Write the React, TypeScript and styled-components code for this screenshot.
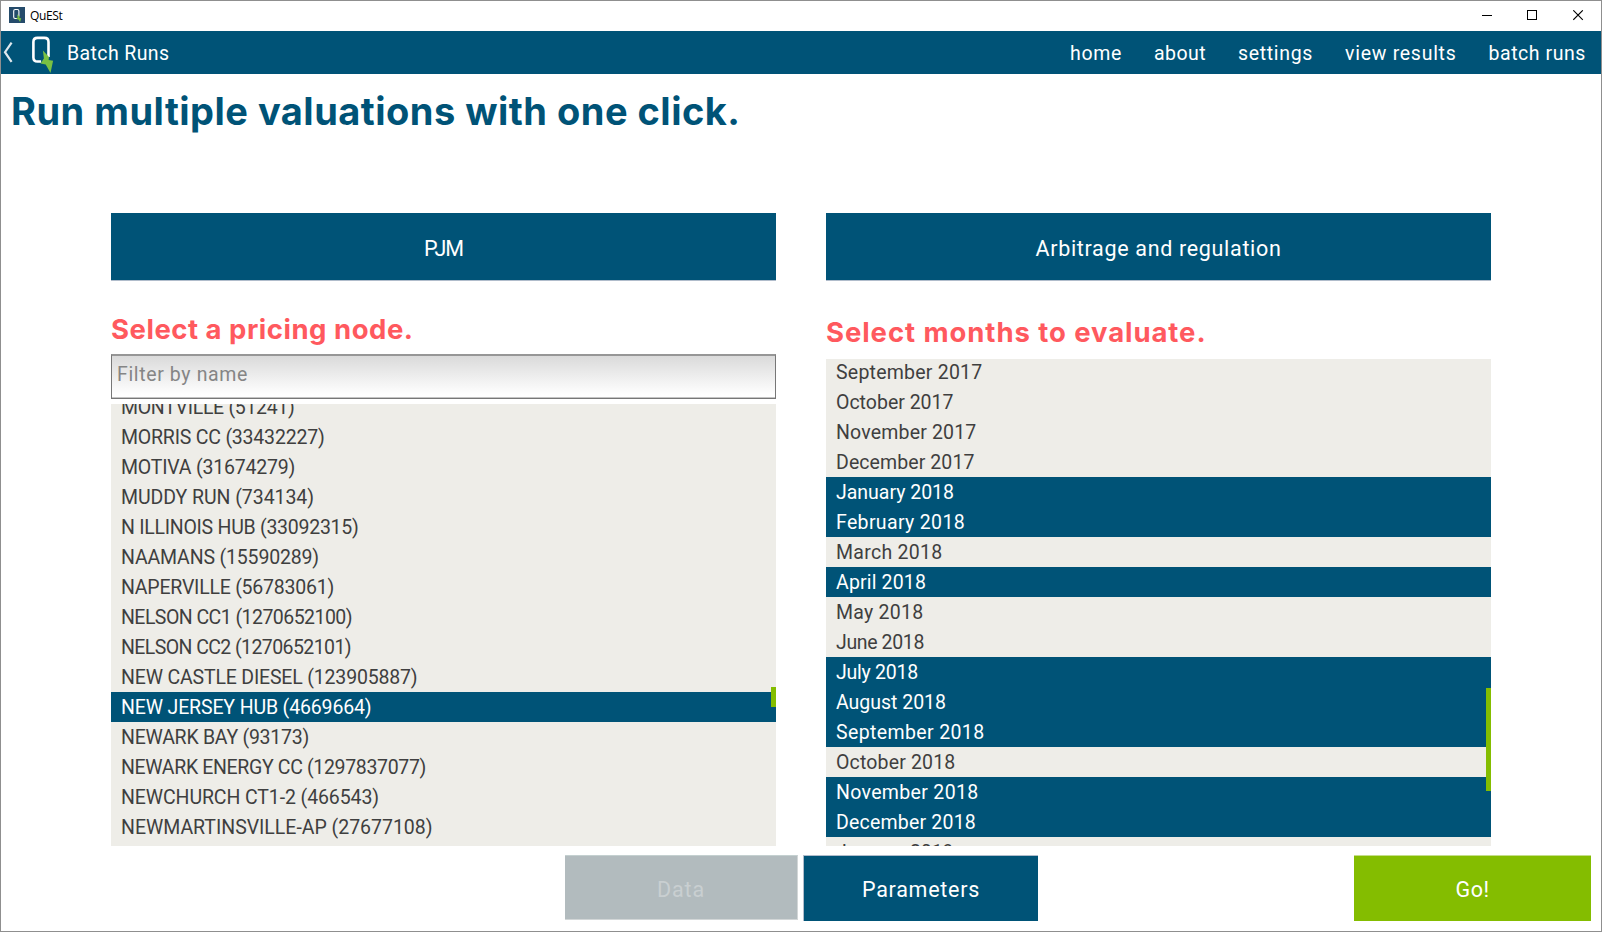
import React, { useLayoutEffect, useRef, useState } from "react";
import styled, { createGlobalStyle } from "styled-components";

const BLUE = "#005377";
const GREEN = "#84bd00";
const CORAL = "#ff595e";
const PAPER = "#eeede8";
const INK = "#3f3f3f";

const GlobalStyle = createGlobalStyle`
  * { box-sizing: border-box; }
  html, body { margin: 0; padding: 0; }
  body { font-family: Roboto, "Liberation Sans", sans-serif; background: #fff; }
`;

const Window = styled.div`
  width: 1602px;
  height: 932px;
  border: 1px solid #8f8f8f;
  background: #fff;
  display: flex;
  flex-direction: column;
  overflow: hidden;
`;

const TitleBar = styled.header`
  height: 30px;
  flex: none;
  display: flex;
  align-items: center;
  padding: 0 17px 2px 8px;
  font: 12px/16px "Open Sans", sans-serif;
  color: #000;
`;

const AppIcon = styled.svg`
  display: block;
  margin-right: 5px;
`;

const TitleText = styled.div`
  padding-top: 2px;
`;

const Controls = styled.div`
  display: flex;
  gap: 34px;
  margin-left: auto;

  svg { display: block; }
  svg:last-child { margin-left: 1px; }
`;

const NavBar = styled.nav`
  height: 43px;
  flex: none;
  display: flex;
  align-items: center;
  background: ${BLUE};
  color: #fff;
  font-size: 19.5px;
  line-height: 41px;
  padding-right: 15px;
`;

const NavMark = styled.svg`
  display: block;
  flex: none;
`;

const NavTitle = styled.div`
  padding-top: 2px;
`;

const NavLinks = styled.div`
  display: flex;
  gap: 32px;
  margin-left: auto;
  padding-top: 2px;
`;

const Heading = styled.h1`
  margin: 0;
  height: 139px;
  flex: none;
  padding: 12px 0 0 10px;
  font-family: Inter, sans-serif;
  font-size: 38px;
  line-height: 50px;
  font-weight: 700;
  color: ${BLUE};
`;

const Columns = styled.main`
  display: flex;
  gap: 50px;
  padding: 0 110px;
  height: 633px;
  flex: none;
`;

const Column = styled.section`
  width: 665px;
  display: flex;
  flex-direction: column;
`;

const PickerButton = styled.button`
  height: 68px;
  flex: none;
  border: 0;
  border-bottom: 1px solid #b0bccb;
  padding: 5px 0 0;
  background: ${BLUE};
  color: #fff;
  font: 21.5px/62px Roboto, sans-serif;
`;

const SectionTitle = styled.h2<{ $drop: number; $height: number }>`
  margin: 0;
  height: ${(p) => p.$height}px;
  padding-top: ${(p) => p.$drop}px;
  flex: none;
  font-family: Inter, sans-serif;
  font-size: 27.5px;
  line-height: 36px;
  font-weight: 700;
  color: ${CORAL};
`;

const FilterBox = styled.div`
  height: 45px;
  flex: none;
  margin-bottom: 5px;
  padding-left: 5px;
  border: 1px solid #777;
  border-top: 2px solid #969696;
  box-shadow: inset 0 -1px 0 #c4c4c4;
  background: linear-gradient(#dadada, #ffffff 92%);
  color: #858585;
  font-size: 19.5px;
  line-height: 38px;
`;

const ListBox = styled.div`
  position: relative;
  flex: 1;
  min-height: 0;
  overflow: hidden;
  background: ${PAPER};
`;

const Rows = styled.ul<{ $scroll: number }>`
  list-style: none;
  margin: -${(p) => p.$scroll}px 0 0;
  padding: 0;
`;

const Row = styled.li<{ $on: boolean }>`
  height: 30px;
  padding: 2px 0 0 10px;
  font-size: 19.5px;
  line-height: 28px;
  color: ${(p) => (p.$on ? "#fff" : INK)};
  background: ${(p) => (p.$on ? BLUE : "transparent")};
`;

const Thumb = styled.div<{ $top: number; $height: number }>`
  position: absolute;
  right: 0;
  top: ${(p) => p.$top}px;
  width: 5px;
  height: ${(p) => p.$height}px;
  background: ${GREEN};
`;

const Footer = styled.footer`
  display: flex;
  align-items: flex-start;
  padding: 9px 10px 0 564px;
`;

const ActionButton = styled.button<{ $kind: "muted" | "primary" | "go" }>`
  width: ${(p) => ({ muted: 233, primary: 235, go: 237 })[p.$kind]}px;
  height: ${(p) => (p.$kind === "muted" ? 65 : 66)}px;
  margin-left: ${(p) => ({ muted: "0", primary: "5px", go: "auto" })[p.$kind]};
  padding: 3px 0 0;
  border: 0 solid;
  border-top: 1px solid ${(p) => ({ muted: "#c4d0d0", primary: "#b0bccb", go: "#c5dd8b" })[p.$kind]};
  border-bottom: ${(p) => (p.$kind === "muted" ? "1px solid #d2d6d7" : "0")};
  border-right: ${(p) => (p.$kind === "muted" ? "1px solid #d2d6d7" : "0")};
  border-left: ${(p) => (p.$kind === "primary" ? "1px solid #b0bccb" : "0")};
  background: ${(p) => ({ muted: "#b2bbbe", primary: BLUE, go: GREEN })[p.$kind]};
  color: ${(p) => (p.$kind === "muted" ? "#c9cfd1" : "#fff")};
  font: 21.5px/62px Roboto, sans-serif;
`;

const Label = styled.span`
  display: inline-block;
  white-space: nowrap;
  vertical-align: top;
`;

/* A one-line label whose tracking is adjusted so that it spans `width` pixels. */
function Fit({ width, children }: { width: number; children: string }) {
  const ref = useRef<HTMLSpanElement>(null);
  const [tracking, setTracking] = useState(0);
  useLayoutEffect(() => {
    const el = ref.current;
    if (!el) return;
    el.style.letterSpacing = "0px";
    const natural = el.getBoundingClientRect().width;
    const next = (width - natural) / children.length;
    el.style.letterSpacing = `${next}px`;
    setTracking(next);
  }, [width, children]);
  return (
    <Label ref={ref} style={{ letterSpacing: tracking }}>
      {children}
    </Label>
  );
}

function Logo() {
  return (
    <>
      <path d="M9.6 25H6Q1.9 25 1.9 20.9V5.5Q1.9 1.4 6 1.4H12.9Q17 1.4 17 5.5V20.5" fill="none" stroke="#fff" strokeWidth="2.6" />
      <path d="M11.4 14L17.5 20.4L17.1 23.4L21.6 24.2L19 36.4L14.2 27.9L9 26.9L12.4 22Z" fill="#7ac143" />
    </>
  );
}

type Item = [string, number, boolean?];

const nodes: Item[] = [
  ["MONTVILLE (51241)", 173.5],
  ["MORRIS CC (33432227)", 203.5],
  ["MOTIVA (31674279)", 174],
  ["MUDDY RUN (734134)", 193],
  ["N ILLINOIS HUB (33092315)", 237.5],
  ["NAAMANS (15590289)", 198],
  ["NAPERVILLE (56783061)", 213],
  ["NELSON CC1 (1270652100)", 231],
  ["NELSON CC2 (1270652101)", 230],
  ["NEW CASTLE DIESEL (123905887)", 296.5],
  ["NEW JERSEY HUB (4669664)", 250.5, true],
  ["NEWARK BAY (93173)", 188],
  ["NEWARK ENERGY CC (1297837077)", 305],
  ["NEWCHURCH CT1-2 (466543)", 258],
  ["NEWMARTINSVILLE-AP (27677108)", 311.5],
];

const months: Item[] = [
  ["September 2017", 146.5],
  ["October 2017", 117.5],
  ["November 2017", 140.5],
  ["December 2017", 138.5],
  ["January 2018", 118, true],
  ["February 2018", 129, true],
  ["March 2018", 106.5],
  ["April 2018", 90, true],
  ["May 2018", 87.5],
  ["June 2018", 88],
  ["July 2018", 82, true],
  ["August 2018", 110, true],
  ["September 2018", 148.5, true],
  ["October 2018", 119.5],
  ["November 2018", 142.5, true],
  ["December 2018", 140, true],
  ["January 2019", 117.5],
];

const links: Item[] = [
  ["home", 52],
  ["about", 52],
  ["settings", 75],
  ["view results", 111.5],
  ["batch runs", 97.5],
];

function List({ items, scroll, thumb }: { items: Item[]; scroll: number; thumb: [number, number] }) {
  return (
    <ListBox>
      <Rows $scroll={scroll}>
        {items.map(([text, width, on]) => (
          <Row key={text} $on={!!on}>
            <Fit width={width}>{text}</Fit>
          </Row>
        ))}
      </Rows>
      <Thumb $top={thumb[0]} $height={thumb[1]} />
    </ListBox>
  );
}

export default function App() {
  return (
    <>
      <GlobalStyle />
      <Window>
        <TitleBar>
          <AppIcon width="16" height="16" viewBox="0 0 16 16">
            <rect width="16" height="16" fill="#254b6b" />
            <path d="M8 11.5H6.2Q4.7 11.5 4.7 10V4Q4.7 2.5 6.2 2.5H8.4Q9.9 2.5 9.9 4V9.5" fill="none" stroke="#fff" strokeWidth="1.1" />
            <path d="M8.2 7.2L10.6 9.8L10.4 10.9L12.2 11.2L11.1 15L9.4 12.4L7.2 12L8.6 10.4Z" fill="#7ac143" />
          </AppIcon>
          <TitleText>
            <Fit width={32.5}>QuESt</Fit>
          </TitleText>
          <Controls>
            <svg width="11" height="11" viewBox="0 0 11 11">
              <path d="M0 5.5H10" stroke="#000" />
            </svg>
            <svg width="11" height="11" viewBox="0 0 11 11">
              <rect x="0.5" y="0.5" width="9" height="9" fill="none" stroke="#000" />
            </svg>
            <svg width="11" height="11" viewBox="0 0 11 11">
              <path d="M0.3 0.3L9.8 9.8M9.8 0.3L0.3 9.8" stroke="#000" strokeWidth="1.1" />
            </svg>
          </Controls>
        </TitleBar>
        <NavBar>
          <NavMark width="66" height="43" viewBox="1 31 66 43">
            <path d="M11.6 42.6L5 52.2L11.6 61.8" fill="none" stroke="#dfe9ee" strokeWidth="2.2" />
            <g transform="translate(31.5 36.5)">
              <Logo />
            </g>
          </NavMark>
          <NavTitle>
            <Fit width={102.5}>Batch Runs</Fit>
          </NavTitle>
          <NavLinks>
            {links.map(([text, width]) => (
              <Fit key={text} width={width}>
                {text}
              </Fit>
            ))}
          </NavLinks>
        </NavBar>
        <Heading>
          <Fit width={729.5}>Run multiple valuations with one click.</Fit>
        </Heading>
        <Columns>
          <Column>
            <PickerButton>
              <Fit width={39}>PJM</Fit>
            </PickerButton>
            <SectionTitle $drop={30} $height={73}>
              <Fit width={302.5}>Select a pricing node.</Fit>
            </SectionTitle>
            <FilterBox>
              <Fit width={131}>Filter by name</Fit>
            </FilterBox>
            <List items={nodes} scroll={12} thumb={[283, 20]} />
          </Column>
          <Column>
            <PickerButton>
              <Fit width={246}>Arbitrage and regulation</Fit>
            </PickerButton>
            <SectionTitle $drop={33} $height={78}>
              <Fit width={380.5}>Select months to evaluate.</Fit>
            </SectionTitle>
            <List items={months} scroll={2} thumb={[329, 103]} />
          </Column>
        </Columns>
        <Footer>
          <ActionButton $kind="muted">
            <Fit width={48}>Data</Fit>
          </ActionButton>
          <ActionButton $kind="primary">
            <Fit width={118}>Parameters</Fit>
          </ActionButton>
          <ActionButton $kind="go">
            <Fit width={34}>Go!</Fit>
          </ActionButton>
        </Footer>
      </Window>
    </>
  );
}
